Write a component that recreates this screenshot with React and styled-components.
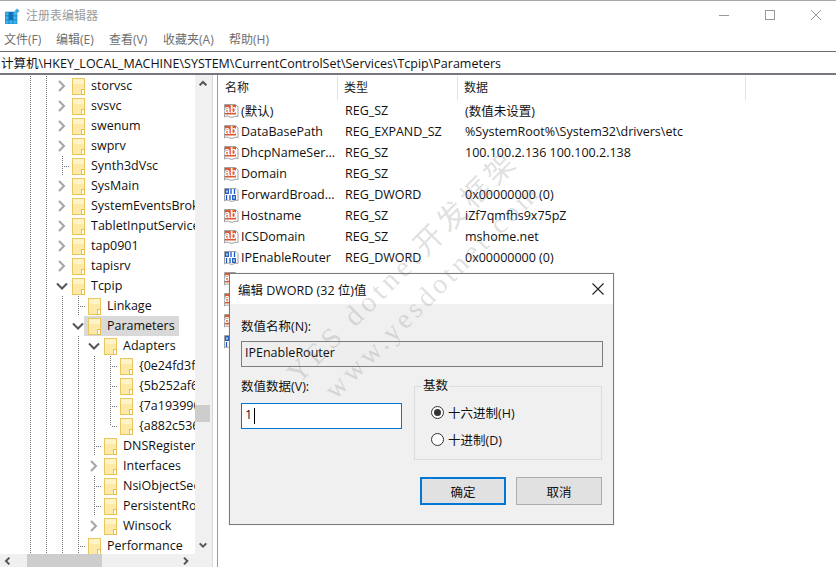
import React from "react";
import styled, { createGlobalStyle } from "styled-components";

const Global = createGlobalStyle`
  html, body { margin: 0; padding: 0; background: #fff; }
  body { font-family: "Open Sans", "Noto Sans CJK SC", sans-serif; font-size: 12px; color: #111; }
  * { box-sizing: border-box; }
`;

const FONT = `"Open Sans", "Noto Sans CJK SC", sans-serif`;

const Win = styled.div`
  position: relative; width: 836px; height: 567px; overflow: hidden;
  display: flex; flex-direction: column; background: #fff; font-family: ${FONT};
  border-top: 1px solid #a8a8a8;
`;
const TitleBar = styled.div`
  height: 29px; display: flex; align-items: center; padding-left: 5px; flex: none;
`;
const TitleText = styled.div`
  margin-left: 6px; color: #9b9b9b; font-size: 12px; margin-top: -1px;
`;
const Controls = styled.div`
  margin-left: auto; margin-right: -3px; display: flex; align-items: center;
`;
const Ctl = styled.div`
  width: 46px; height: 29px; display: flex; align-items: center; justify-content: center; margin-top: -1px;
`;
const Menu = styled.div`
  height: 21px; display: flex; align-items: center; padding-left: 4px; flex: none; color: #6e6e6e; font-size: 12px;
`;
const MenuItem = styled.span`
  width: ${p => p.$w}px; white-space: nowrap; margin-top: -3px;
`;
const Address = styled.div`
  height: 24px; flex: none; border-top: 1px solid #6b6b6b; border-bottom: 2px solid #767680;
  display: flex; align-items: center; padding-left: 1px; font-size: 12.5px; color: #111; white-space: nowrap;
`;
const Main = styled.div`
  flex: 1; min-height: 0; display: flex;
`;
const TreePane = styled.div`
  width: 213px; flex: none; display: grid; grid-template-columns: 195px 17px; grid-template-rows: 1fr 13px; border-right: 1px solid #d8d8d8;
`;
const TreeView = styled.div`
  overflow: hidden; padding-top: 1px;
`;
const Row = styled.div`
  height: 20px; display: flex; padding-left: 22px; white-space: nowrap; font-size: 12.5px;
`;
const Cell = styled.div`
  width: 16px; height: 20px; flex: none; position: relative;
  display: flex; align-items: center; justify-content: center;
  &::before {
    content: ""; position: absolute; left: 8px; top: 0; width: 1px;
    height: ${p => (p.$k === "E" ? "10px" : "20px")};
    display: ${p => ("LTE".includes(p.$k) ? "block" : "none")};
    background: repeating-linear-gradient(to bottom, #707070 0 1px, transparent 1px 2px);
  }
  &::after {
    content: ""; position: absolute; left: 9px; top: 10px; width: 6px; height: 1px;
    display: ${p => ("TE".includes(p.$k) ? "block" : "none")};
    background: repeating-linear-gradient(to right, transparent 0 1px, #707070 1px 2px);
  }
`;
const Label = styled.div`
  display: flex; align-items: center; height: 20px; margin-left: -2px; padding: 0 4px;
  background: ${p => (p.$sel ? "#d9d9d9" : "transparent")};
`;
const LabelText = styled.span`
  margin-left: 6px; margin-top: -1px;
`;
const VScroll = styled.div`
  background: #f0f0f0; display: flex; flex-direction: column; align-items: center; position: relative; padding-right: 2px;
`;
const VThumb = styled.div`
  position: absolute; left: 0; top: 330px; width: 15px; height: 17px; background: #cdcdcd;
`;
const ArrowBtn = styled.div`
  height: 18px; width: 15px; display: flex; align-items: center; justify-content: center; margin-top: ${p => (p.$end ? "auto" : 0)};
`;
const HScroll = styled.div`
  background: #f0f0f0; display: flex; align-items: center; position: relative; grid-column: 1 / 2;
`;
const HThumb = styled.div`
  position: absolute; left: 27px; top: 0; width: 75px; height: 13px; background: #cdcdcd;
`;
const HArrow = styled.div`
  width: 16px; height: 13px; display: flex; align-items: center; justify-content: center;
  margin-left: ${p => (p.$end ? "auto" : 0)}; margin-right: ${p => (p.$end ? "1px" : 0)};
`;
const Corner = styled.div`
  background: #f0f0f0;
`;
const ListPane = styled.div`
  flex: 1; margin-left: 4px; border-left: 1px solid #9a9a9a; min-width: 0;
`;
const Header = styled.div`
  display: grid; grid-template-columns: 120px 120px 288px; height: 25px; align-items: stretch; font-size: 12px; color: #222;
`;
const HeadCell = styled.div`
  border-right: 1px solid #e5e5e5; padding-left: ${p => p.$pad}px; display: flex; align-items: center; margin-top: 1px; padding-bottom: 3px;
`;
const LRow = styled.div`
  display: grid; grid-template-columns: 120px 120px 1fr; height: 21px; align-items: center; white-space: nowrap; font-size: 12.5px;
`;
const NameCell = styled.div`
  display: flex; align-items: center; padding-left: 5px; gap: 2px;
`;
const TypeCell = styled.div`
  padding-left: 7px; margin-top: -1px;
`;
const DataCell = styled.div`
  padding-left: 7px; margin-top: -1px;
`;
const NameText = styled.span`
  margin-top: -1px;
`;

const Dialog = styled.div`
  position: absolute; left: 229px; top: 272px; width: 385px; height: 252px;
  background: #f0f0f0; border: 1px solid #7a7a7a; display: flex; flex-direction: column;
  box-shadow: 0 0 0 1px rgba(0,0,0,0.03);
`;
const DlgHead = styled.div`
  height: 30px; flex: none; background: #fff; display: flex; align-items: center; justify-content: space-between;
  padding: 0 9px 0 8px; font-size: 12.5px; color: #111;
`;
const DlgBody = styled.div`
  flex: 1; padding: 14px 11px 0; display: flex; flex-direction: column; font-size: 12.5px; color: #111;
`;
const FieldLabel = styled.div`
  height: 18px; line-height: 18px;
`;
const ReadField = styled.div`
  margin-top: 5px; height: 26px; width: 362px; background: #eeeeee; border: 1px solid #7d7d7d;
  display: flex; align-items: center; padding: 0 0 3px 3px;
`;
const TwoCol = styled.div`
  display: flex; margin-top: 11px; height: 83px;
`;
const LeftCol = styled.div`
  width: 173px; flex: none; padding-top: 0;
`;
const ValueInput = styled.div`
  margin-top: 7px; width: 161px; height: 26px; background: #fff; border: 1px solid #0078d7;
  display: flex; align-items: center; padding: 0 0 3px 3px;
`;
const Caret = styled.span`
  display: inline-block; width: 1px; height: 16px; background: #000; margin: 3px 0 0 2px;
`;
const Group = styled.fieldset`
  margin: 0; padding: 0 0 0 16px; width: 189px; height: 82px; border: 1px solid #dcdcdc; min-width: 0;
  display: flex; flex-direction: column;
`;
const Legend = styled.legend`
  padding: 0 1px; margin-left: -9px; line-height: 16px; font-size: 12.5px;
`;
const RadioRow = styled.div`
  display: flex; align-items: center; height: 20px; margin-top: ${p => p.$mt}px;
`;
const Radio = styled.span`
  width: 13px; height: 13px; border-radius: 50%; border: 1px solid #333; background: #fff; flex: none; margin-right: 4px;
  display: flex; align-items: center; justify-content: center;
  &::after {
    content: ""; width: 7px; height: 7px; border-radius: 50%; background: #333;
    display: ${p => (p.$on ? "block" : "none")};
  }
`;
const Buttons = styled.div`
  display: flex; justify-content: flex-end; gap: 10px; margin-top: 16px;
`;
const Button = styled.div`
  width: ${p => p.$w}px; height: 28px; background: #e1e1e1; display: flex; align-items: center; justify-content: center;
  border: ${p => (p.$primary ? "2px solid #0078d7" : "1px solid #adadad")}; font-size: 12.5px;
`;
const Watermark = styled.div`
  position: absolute; left: ${p => p.$x}px; top: ${p => p.$y}px; transform: rotate(-45deg); transform-origin: left bottom;
  font-family: "Liberation Serif", "Noto Sans CJK SC", serif; font-size: ${p => p.$size}px; line-height: 1;
  letter-spacing: ${p => p.$ls}px; color: rgba(120,120,120,0.24); white-space: nowrap; pointer-events: none;
`;

const AppIcon = () => (
  <svg width="15" height="16" viewBox="0 0 15 16">
    <g>
      {[0, 4, 8].map(y => [0, 4, 8].map(x => (
        <rect key={`${x}${y}`} x={x} y={y + 4} width="4" height="4" fill={(x === 4 && y === 0) || (x === 4 && y === 4) ? "#0f6fb8" : "#3bb4ee"} stroke="#1273b5" strokeWidth="0.5" />
      )))}
    </g>
    <path d="M12 0.5 L14.5 3 L12 5.5 L9.5 3 Z" fill="#3aa3dd" stroke="#b5dcf2" strokeWidth="0.5" />
  </svg>
);
const Folder = () => (
  <svg width="13" height="17" viewBox="0 0 13 17" style={{ flex: "none" }}>
    <rect x="0.5" y="0.5" width="12" height="16" fill="#fdeaa8" stroke="#eac65c" />
    <rect x="1" y="1" width="11" height="5" fill="#fff3c8" />
    <rect x="9.5" y="11.5" width="3" height="5" fill="#fff" stroke="#e8bf4d" />
  </svg>
);
const Chevron = ({ dir, color = "#a6a6a6", size = 12 }) => {
  const d = { right: "M3 1 L8 6 L3 11", down: "M1 3.5 L6 8.5 L11 3.5", up: "M1 8 L6 3 L11 8", left: "M8 1 L3 6 L8 11" }[dir];
  return (
    <svg width={size} height={size} viewBox="0 0 12 12">
      <path d={d} fill="none" stroke={color} strokeWidth={24 / size} />
    </svg>
  );
};
const AbIcon = () => (
  <svg width="16" height="17" viewBox="0 0 16 17" style={{ flex: "none" }}>
    <path d="M1.5 2.5 H12.5 L15 5 V14.5 C12 13 10 16.5 7 15 C5 14 3 13.5 1.5 15 Z" fill="#fff" stroke="#a0a0a0" />
    <rect x="2" y="3" width="11" height="9.5" fill="#db5a33" />
    <text x="7.5" y="11" textAnchor="middle" fontSize="10.5" fontWeight="700" fontFamily="Liberation Sans, sans-serif" fill="#fff">ab</text>
  </svg>
);
const DwIcon = () => (
  <svg width="16" height="17" viewBox="0 0 16 17" style={{ flex: "none" }}>
    <path d="M1.5 2.5 H13 L15 4.5 V14.5 C12 13 10 16.5 7 15 C5 14 3 13.5 1.5 15 Z" fill="#fff" stroke="#a0a0a0" />
    <g fill="none" stroke="#1a56c4" strokeWidth="1.3">
      <rect x="2.7" y="3.7" width="2.6" height="3.6" />
      <path d="M8 3 V8 M11.5 3 V8" />
      <path d="M3.5 9 V14 M7 9 V14" />
      <rect x="9.7" y="9.7" width="2.6" height="3.6" />
    </g>
  </svg>
);

const top = ["storvsc", "svsvc", "swenum", "swprv"].map(t => ({ c: "LLC", t }));
const rows = [
  ...top,
  { c: "LLT", t: "Synth3dVsc" },
  ...["SysMain", "SystemEventsBroker", "TabletInputService", "tap0901", "tapisrv"].map(t => ({ c: "LLC", t })),
  { c: "LLD", t: "Tcpip" },
  { c: "LLLT", t: "Linkage" },
  { c: "LLLD", t: "Parameters", sel: true },
  { c: "LLLLD", t: "Adapters" },
  { c: "LLLLLT", t: "{0e24fd3f-0000" },
  { c: "LLLLLT", t: "{5b252af6-0000" },
  { c: "LLLLLT", t: "{7a193990-0000" },
  { c: "LLLLLE", t: "{a882c536-0000" },
  { c: "LLLLT", t: "DNSRegisteredAdapters" },
  { c: "LLLLC", t: "Interfaces" },
  { c: "LLLLT", t: "NsiObjectSecurity" },
  { c: "LLLLT", t: "PersistentRoutes" },
  { c: "LLLLC", t: "Winsock" },
  { c: "LLLT", t: "Performance" },
];

const list = [
  ["ab", "(默认)", "REG_SZ", "(数值未设置)"],
  ["ab", "DataBasePath", "REG_EXPAND_SZ", "%SystemRoot%\\System32\\drivers\\etc"],
  ["ab", "DhcpNameSer...", "REG_SZ", "100.100.2.136 100.100.2.138"],
  ["ab", "Domain", "REG_SZ", ""],
  ["dw", "ForwardBroad...", "REG_DWORD", "0x00000000 (0)"],
  ["ab", "Hostname", "REG_SZ", "iZf7qmfhs9x75pZ"],
  ["ab", "ICSDomain", "REG_SZ", "mshome.net"],
  ["dw", "IPEnableRouter", "REG_DWORD", "0x00000000 (0)"],
  ["ab", "", "", ""],
  ["ab", "", "", ""],
  ["ab", "", "", ""],
  ["dw", "", "", ""],
];

const menus = [["文件(F)", 52], ["编辑(E)", 53], ["查看(V)", 54], ["收藏夹(A)", 66], ["帮助(H)", 50]];

export default function App() {
  return (
    <>
      <Global />
      <Win>
        <TitleBar>
          <AppIcon />
          <TitleText>注册表编辑器</TitleText>
          <Controls>
            <Ctl>
              <svg width="10" height="10"><path d="M0 5.5H10" stroke="#999" /></svg>
            </Ctl>
            <Ctl>
              <svg width="10" height="10"><rect x="0.5" y="0.5" width="9" height="9" fill="none" stroke="#999" /></svg>
            </Ctl>
            <Ctl>
              <svg width="10" height="10"><path d="M0 0L10 10M10 0L0 10" stroke="#999" /></svg>
            </Ctl>
          </Controls>
        </TitleBar>
        <Menu>
          {menus.map(([t, w]) => <MenuItem key={t} $w={w}>{t}</MenuItem>)}
        </Menu>
        <Address>计算机\HKEY_LOCAL_MACHINE\SYSTEM\CurrentControlSet\Services\Tcpip\Parameters</Address>
        <Main>
          <TreePane>
            <TreeView>
              {rows.map(r => (
                <Row key={r.t}>
                  {[...r.c].map((k, i) => (
                    <Cell key={i} $k={k}>
                      {k === "C" && <Chevron dir="right" />}
                      {k === "D" && <Chevron dir="down" color="#555" />}
                    </Cell>
                  ))}
                  <Label $sel={r.sel}>
                    <Folder />
                    <LabelText>{r.t}</LabelText>
                  </Label>
                </Row>
              ))}
            </TreeView>
            <VScroll>
              <ArrowBtn><Chevron dir="up" color="#555" size={8} /></ArrowBtn>
              <VThumb />
              <ArrowBtn $end><Chevron dir="down" color="#555" size={8} /></ArrowBtn>
            </VScroll>
            <HScroll>
              <HArrow><Chevron dir="left" color="#555" size={8} /></HArrow>
              <HThumb />
              <HArrow $end><Chevron dir="right" color="#555" size={8} /></HArrow>
            </HScroll>
            <Corner />
          </TreePane>
          <ListPane>
            <Header>
              <HeadCell $pad={7}>名称</HeadCell>
              <HeadCell $pad={6}>类型</HeadCell>
              <HeadCell $pad={6}>数据</HeadCell>
            </Header>
            {list.map((r, i) => (
              <LRow key={i}>
                <NameCell>
                  {r[0] === "ab" ? <AbIcon /> : <DwIcon />}
                  <NameText>{r[1]}</NameText>
                </NameCell>
                <TypeCell>{r[2]}</TypeCell>
                <DataCell>{r[3]}</DataCell>
              </LRow>
            ))}
          </ListPane>
        </Main>

        <Dialog>
          <DlgHead>
            <span>编辑 DWORD (32 位)值</span>
            <svg width="12" height="12"><path d="M0.5 0.5L11.5 11.5M11.5 0.5L0.5 11.5" stroke="#222" strokeWidth="1.1" /></svg>
          </DlgHead>
          <DlgBody>
            <FieldLabel>数值名称(N):</FieldLabel>
            <ReadField>IPEnableRouter</ReadField>
            <TwoCol>
              <LeftCol>
                <FieldLabel>数值数据(V):</FieldLabel>
                <ValueInput>1<Caret /></ValueInput>
              </LeftCol>
              <Group>
                <Legend>基数</Legend>
                <RadioRow $mt={8}><Radio $on />十六进制(H)</RadioRow>
                <RadioRow $mt={7}><Radio />十进制(D)</RadioRow>
              </Group>
            </TwoCol>
            <Buttons>
              <Button $primary $w={86}>确定</Button>
              <Button $w={86}>取消</Button>
            </Buttons>
          </DlgBody>
        </Dialog>

        <Watermark $x={302} $y={358} $size={29} $ls={4.5}>YES dotnet开发框架</Watermark>
        <Watermark $x={339} $y={375} $size={28} $ls={3.8}>www.yesdotnet.com</Watermark>
      </Win>
    </>
  );
}
